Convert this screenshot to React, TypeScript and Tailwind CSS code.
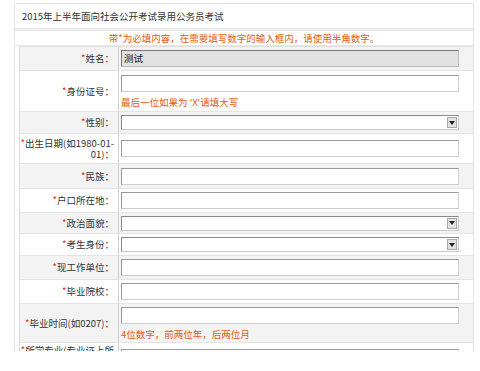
import React from "react";

type Row = {
  label: React.ReactNode;
  h: number;
  kind: "filled" | "input" | "select";
  value?: string;
  hint?: string;
  top?: boolean;
};

const rows: Row[] = [
  { label: "姓名", h: 24, kind: "filled", value: "测试" },
  { label: "身份证号", h: 41, kind: "input", hint: "最后一位如果为 'X'请填大写" },
  { label: "性别", h: 22, kind: "select" },
  {
    label: (
      <>
        出生日期(如1980-01-
        <br />
        01)
      </>
    ),
    h: 30,
    kind: "input",
  },
  { label: "民族", h: 25, kind: "input" },
  { label: "户口所在地", h: 24, kind: "input" },
  { label: "政治面貌", h: 21, kind: "select" },
  { label: "考生身份", h: 22, kind: "select" },
  { label: "现工作单位", h: 24, kind: "input" },
  { label: "毕业院校", h: 24, kind: "input" },
  { label: "毕业时间(如0207)", h: 39, kind: "input", hint: "4位数字，前两位年，后两位月" },
  {
    label: (
      <>
        所学专业(专业证上所
        <br />
        学专业名称)
      </>
    ),
    h: 36,
    kind: "input",
    top: true,
  },
];

function Field({ row }: { row: Row }) {
  if (row.kind === "select") {
    return (
      <div className="relative h-[15px] w-[338px] border border-[#8a8a8a] border-b-[#c8c8c8] border-r-[#c8c8c8] bg-white">
        <div className="absolute right-[1px] top-[1px] flex h-[11px] w-[10px] items-center justify-center border border-[#a8a8a8] bg-[#e2e2e2]">
          <svg width="6" height="4" viewBox="0 0 6 4">
            <path d="M0 0 L6 0 L3 4 Z" fill="#222" />
          </svg>
        </div>
      </div>
    );
  }
  if (row.kind === "filled") {
    return (
      <div className="flex h-[17px] w-[338px] items-center border border-[#777] border-b-[#bcbcbc] border-r-[#bcbcbc] bg-[#e2e2e2] pl-[2px] text-[9.5px] leading-none text-[#111]">
        {row.value}
      </div>
    );
  }
  return (
    <div className="h-[17px] w-[338px] border border-[#9a9a9a] border-b-[#cfcfcf] border-r-[#cfcfcf] bg-white" />
  );
}

export default function App() {
  return (
    <div
      className="h-[371px] w-[480px] overflow-hidden bg-white"
      style={{ fontFamily: '"Noto Sans CJK SC", "Liberation Sans", sans-serif' }}
    >
      <div className="ml-[14px] mt-[3px] h-[348px] w-[460px] overflow-hidden rounded-tl-[4px] rounded-tr-[2px] border-l border-r border-t border-[#e2e2e2]">
        <div className="flex h-[24px] items-center pl-[7px] text-[9.5px] text-[#333]">
          2015年上半年面向社会公开考试录用公务员考试
        </div>
        <div className="h-[3px] bg-[#ececec]" />
        <div className="flex h-[15px] items-center justify-center border-b border-[#e6e6e6] text-[9.5px] text-[#e0600e]">
          带*为必填内容，在需要填写数字的输入框内，请使用半角数字。
        </div>
        <div className="ml-[4px] w-[454px] border-t border-[#e0e0e0]">
          {rows.map((row, i) => (
            <div
              key={i}
              className={`flex border-b border-[#e4e4e4] ${i % 2 === 0 ? "bg-[#f3f3f3]" : "bg-white"}`}
              style={{ height: row.h }}
            >
              <div
                className={`flex w-[100px] shrink-0 justify-end border-l border-r border-l-[#dcdcdc] border-r-[#cfcfcf] pr-[4px] text-right text-[9.5px] leading-[11px] text-[#333] ${
                  row.top ? "items-start pt-[2px]" : "items-center"
                }`}
              >
                <span>
                  <span className="text-[#e02020]">*</span>
                  {row.label}：
                </span>
              </div>
              <div
                className={`flex flex-col gap-[6px] pl-[2px] ${row.top ? "justify-start pt-[6px]" : "justify-center"}`}
              >
                <Field row={row} />
                {row.hint && (
                  <div className="text-[9.5px] leading-none text-[#e0600e]">{row.hint}</div>
                )}
              </div>
            </div>
          ))}
        </div>
      </div>
    </div>
  );
}
